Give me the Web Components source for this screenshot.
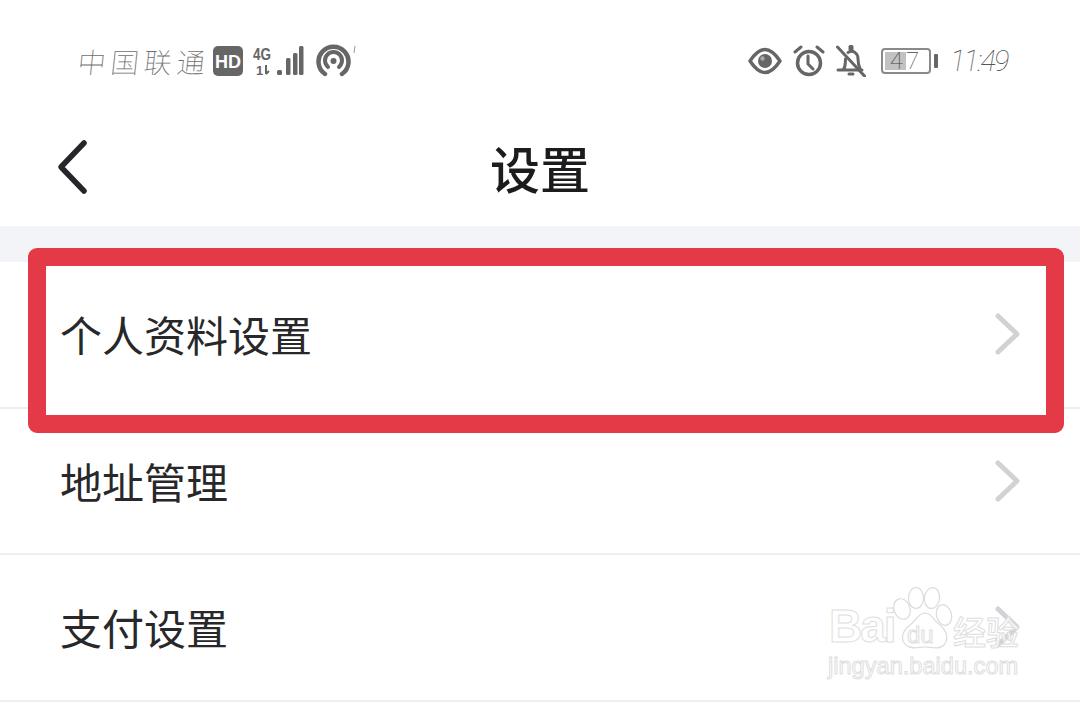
<!DOCTYPE html>
<html lang="zh">
<head>
<meta charset="utf-8">
<title>设置</title>
<style>
  html, body { margin: 0; padding: 0; background: #fff; }
  body { position: relative; width: 1080px; height: 702px; overflow: hidden; font-family: "Noto Sans CJK SC", "Noto Sans", sans-serif; }
</style>
</head>
<body>
<status-bar></status-bar>
<nav-header>设置</nav-header>
<div style="height:36px;background:#f3f4f7"></div>
<setting-row>个人资料设置</setting-row>
<setting-row>地址管理</setting-row>
<setting-row>支付设置</setting-row>
<highlight-box></highlight-box>
<baidu-mark></baidu-mark>

<script>
class StatusBar extends HTMLElement {
  constructor() {
    super();
    this.attachShadow({ mode: 'open' });
    this.shadowRoot.innerHTML = `
      <style>
        :host { display: flex; align-items: center; justify-content: space-between; height: 122px; box-sizing: border-box; padding: 0 72px 0 78px; color: #666; }
        .side { display: flex; align-items: center; }
        .carrier { font: 100 28px "Noto Sans CJK SC", sans-serif; letter-spacing: 5px; color: #6e6e6e; transform: skewX(-6deg); width: 135px; white-space: nowrap; }
        svg { display: block; flex: none; }
        .time { font: italic 100 29px "Roboto", "Liberation Sans", sans-serif; letter-spacing: -1.800px; color: #555; margin-left: 12px; width: 58px; white-space: nowrap; }
        .batt { position: relative; width: 50px; height: 26px; box-sizing: border-box; border: 2px solid #8a8a8a; border-radius: 4px; margin-left: 15px; overflow: hidden; }
        .batt i { position: absolute; left: 2px; top: 2px; bottom: 2px; width: 21px; background: #c2c2c2; }
        .batt span { position: relative; display: block; text-align: center; font: 100 24px/22px "Roboto", "Liberation Sans", sans-serif; letter-spacing: 3px; color: #444; }
        .nub { width: 4px; height: 14px; background: #666; border-radius: 1px; margin-left: 3px; }
      </style>
      <div class="side">
        <span class="carrier">中国联通</span>
        <svg width="30" height="30" viewBox="0 0 30 30"><rect width="30" height="30" rx="5" fill="#666"/><text x="15" y="22" text-anchor="middle" font-family="Liberation Sans" font-weight="700" font-size="18" fill="#fff">HD</text></svg>
        <svg width="52" height="32" viewBox="0 0 52 32" style="margin-left:10px">
          <text x="0" y="15" font-family="Liberation Sans" font-weight="700" font-size="17" fill="#666" textLength="18" lengthAdjust="spacingAndGlyphs">4G</text>
          <text x="3" y="30" font-family="Liberation Sans" font-weight="700" font-size="13" fill="#666">1</text>
          <path d="M13 20v9M13 29l3-3" stroke="#666" stroke-width="2" fill="none"/>
          <rect x="24" y="25" width="5" height="5" rx="1.500" fill="#666"/>
          <rect x="33" y="13" width="4.500" height="17" rx="1.500" fill="#666"/>
          <rect x="40" y="8" width="4.500" height="22" rx="1.500" fill="#666"/>
          <rect x="46" y="1" width="4.500" height="29" rx="1.500" fill="#666"/>
        </svg>
        <svg width="44" height="34" viewBox="0 0 44 34" style="margin-left:11px">
          <path d="M9 30A15 15 0 1 1 26 30" fill="none" stroke="#666" stroke-width="4.500" stroke-linecap="round"/>
          <path d="M12 23A8.500 8.500 0 1 1 23 23" fill="none" stroke="#666" stroke-width="4" stroke-linecap="round"/>
          <circle cx="17.500" cy="17" r="3" fill="#666"/>
          <path d="M39 2l-1 7" stroke="#999" stroke-width="1"/>
        </svg>
      </div>
      <div class="side">
        <svg width="34" height="28" viewBox="0 0 34 28">
          <path d="M2 14C8 5 12 2.500 17 2.500S26 5 32 14C26 23 22 25.500 17 25.500S8 23 2 14Z" fill="none" stroke="#666" stroke-width="3.500" stroke-linejoin="round"/>
          <circle cx="17" cy="14" r="7" fill="#666"/><circle cx="14.500" cy="11.500" r="2.200" fill="#aaa"/>
        </svg>
        <svg width="32" height="32" viewBox="0 0 32 32" style="margin-left:11px">
          <circle cx="16" cy="18" r="11.500" fill="none" stroke="#666" stroke-width="3.500"/>
          <path d="M15 11v8l5 5" fill="none" stroke="#666" stroke-width="3" stroke-linecap="round"/>
          <path d="M2 7l6-5M30 7l-6-5" stroke="#666" stroke-width="3" stroke-linecap="round"/>
        </svg>
        <svg width="30" height="32" viewBox="0 0 30 32" style="margin-left:11px">
          <path d="M2 25h24M7 25c3-3 2-6 2.500-11M12 7.500C17 4.500 22 8 22 14c0 4 .5 7 2.500 11M13 29h4M14 1.500h2v3h-2z" fill="none" stroke="#666" stroke-width="3" stroke-linecap="round" stroke-linejoin="round"/>
          <path d="M1.500 2L28.500 31" stroke="#666" stroke-width="3" stroke-linecap="round"/>
        </svg>
        <div class="batt"><i></i><span>47</span></div>
        <div class="nub"></div>
        <span class="time">11:49</span>
      </div>`;
  }
}

class NavHeader extends HTMLElement {
  constructor() {
    super();
    this.attachShadow({ mode: 'open' });
    this.shadowRoot.innerHTML = `
      <style>
        :host { display: grid; grid-template-columns: 1fr auto 1fr; align-items: center; height: 104px; box-sizing: border-box; padding-bottom: 14px; }
        .title { font: 500 50px/1 "Noto Sans CJK SC", sans-serif; color: #1c1c1e; }
        svg { display: block; margin-left: 56px; }
      </style>
      <svg width="34" height="60" viewBox="0 0 34 60"><path d="M28 6L5 30L28 54" fill="none" stroke="#26262a" stroke-width="5.500" stroke-linecap="round" stroke-linejoin="round"/></svg>
      <span class="title"><slot></slot></span>`;
  }
}

class SettingRow extends HTMLElement {
  constructor() {
    super();
    this.attachShadow({ mode: 'open' });
    this.shadowRoot.innerHTML = `
      <style>
        :host { display: flex; align-items: center; justify-content: space-between; height: 146.500px; box-sizing: border-box; padding: 0 58px 0 60px; border-bottom: 2px solid #eeeff1; font: 400 42px/1 "Noto Sans CJK SC", sans-serif; color: #28282a; }
      </style>
      <span><slot></slot></span>
      <svg width="30" height="48" viewBox="0 0 30 48"><path d="M6 6L25 24L6 42" fill="none" stroke="#d0d2d5" stroke-width="5" stroke-linecap="round" stroke-linejoin="round"/></svg>`;
  }
}

// red annotation drawn on top of the first row, it also hides the row's line
class HighlightBox extends HTMLElement {
  constructor() {
    super();
    this.attachShadow({ mode: 'open' });
    this.shadowRoot.innerHTML = `
      <style>
        :host { display: block; position: absolute; left: 28px; top: 248px; width: 1036px; height: 185px; box-sizing: border-box; border: 18px solid #e43a47; border-radius: 9px; }
        :host::after { content: ""; position: absolute; left: 0; right: 0; top: 136px; height: 8px; background: #fff; }
      </style>`;
  }
}

// baidu jingyan watermark, bottom right
class BaiduMark extends HTMLElement {
  constructor() {
    super();
    this.attachShadow({ mode: 'open' });
    this.shadowRoot.innerHTML = `
      <style>
        :host { display: block; position: absolute; left: 826px; top: 584px; width: 200px; height: 100px; }
        .t { position: absolute; white-space: nowrap; color: rgba(255,255,255,.8); -webkit-text-stroke: 1px #dedede; font-family: "Liberation Sans", sans-serif; }
        .bai { left: 3px; top: 0; font-size: 46px; font-weight: 700; line-height: 84px; letter-spacing: -2px; }
        .du { left: 81px; top: 36px; font-size: 24px; line-height: 30px; }
        .jy { left: 127px; top: 27px; font: 500 33px/40px "Noto Sans CJK SC", sans-serif; }
        .url { left: 2px; top: 66px; font-size: 23.600px; line-height: 32px; }
        svg { position: absolute; left: 66px; top: 0; }
      </style>
      <svg width="62" height="68" viewBox="0 0 62 68" fill="#fff" stroke="#dcdcdc" stroke-width="1.200">
        <ellipse cx="10" cy="25" rx="8" ry="10.500" transform="rotate(-20 10 25)"/>
        <ellipse cx="24" cy="14" rx="7.500" ry="10.500"/>
        <ellipse cx="40" cy="14" rx="7.500" ry="10.500" transform="rotate(8 40 14)"/>
        <ellipse cx="52" cy="31" rx="7.500" ry="10.500" transform="rotate(-15 52 31)"/>
        <path d="M33 29C26 29 24 37 18 41C10 47 8 56 14 61C20 66 27 63 33 63C39 63 47 66 52 61C57 55 55 47 48 41C42 37 40 29 33 29Z"/>
      </svg>
      <span class="t bai">Bai</span>
      <span class="t du">du</span>
      <span class="t jy">经验</span>
      <span class="t url">jingyan.baidu.com</span>`;
  }
}

customElements.define('status-bar', StatusBar);
customElements.define('nav-header', NavHeader);
customElements.define('setting-row', SettingRow);
customElements.define('highlight-box', HighlightBox);
customElements.define('baidu-mark', BaiduMark);
</script>
</body>
</html>
